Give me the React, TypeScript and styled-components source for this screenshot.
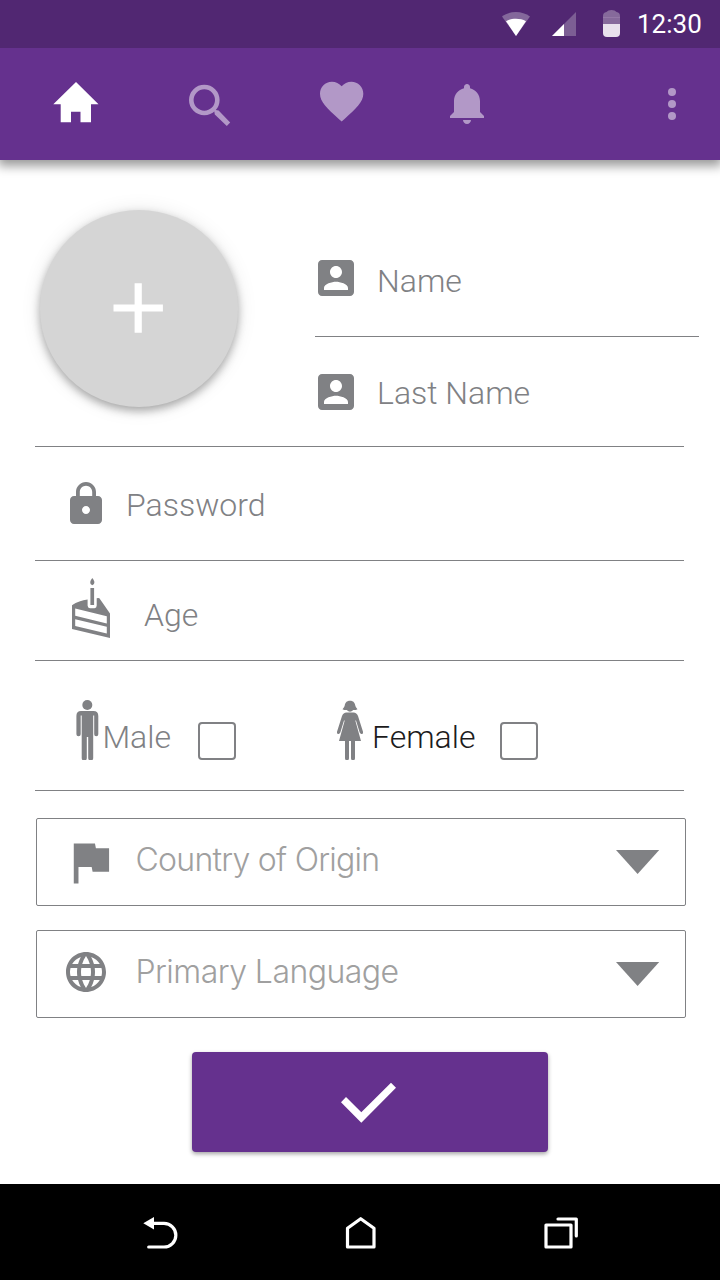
import React from "react";
import styled, { createGlobalStyle } from "styled-components";

const purple = "#65318e";
const purpleDark = "#512772";
const grey = "#808184";

const GlobalStyle = createGlobalStyle`
  * { box-sizing: border-box; }
  body {
    margin: 0;
    background: #fff;
    font-family: Roboto, "Liberation Sans", sans-serif;
  }
  svg { display: block; flex: none; }
`;

const Screen = styled.div`
  width: 720px;
  height: 1280px;
  display: flex;
  flex-direction: column;
  overflow: hidden;
  background: #fff;
`;

const StatusBar = styled.div`
  position: relative;
  z-index: 1;
  height: 48px;
  flex: none;
  display: flex;
  align-items: flex-start;
  padding: 10px 0 0 502px;
  background: ${purpleDark};
`;

const StatusIcon = styled.svg<{ $gap: number; $top?: number }>`
  margin-right: ${(p) => p.$gap}px;
  margin-top: ${(p) => p.$top ?? 0}px;
`;

const Clock = styled.span`
  color: #fff;
  font-size: 26px;
  line-height: 30px;
  margin-top: -1px;
  white-space: nowrap;
`;

const AppBar = styled.nav`
  height: 112px;
  flex: none;
  display: flex;
  align-items: flex-start;
  background: ${purple};
  box-shadow: 0 4px 10px 2px rgba(0, 0, 0, 0.4);
`;

const Tab = styled.svg<{ $left: number; $top: number; $active?: boolean }>`
  margin: ${(p) => p.$top}px 0 0 ${(p) => p.$left}px;
  color: ${(p) => (p.$active ? "#fff" : "#b298c7")};
  fill: currentColor;
`;

const Profile = styled.section`
  height: 286px;
  flex: none;
  display: flex;
`;

const Avatar = styled.button`
  width: 198px;
  height: 196.5px;
  flex: none;
  margin: 50px 77.5px 0 39.5px;
  padding: 0 1px 1.5px 0;
  border: 0;
  border-radius: 50%;
  background: #d5d5d5;
  box-shadow: 0 4px 8px rgba(0, 0, 0, 0.3), 0 1px 20px rgba(0, 0, 0, 0.1);
  display: flex;
  align-items: center;
  justify-content: center;
`;

const Names = styled.div`
  width: 384px;
  display: flex;
  flex-direction: column;
`;

const Field = styled.label<{ $height: number; $left?: number }>`
  height: ${(p) => p.$height}px;
  flex: none;
  display: flex;
  align-items: flex-start;
  padding-left: ${(p) => p.$left ?? 0}px;
`;

const FieldIcon = styled.svg<{ $top: number }>`
  margin-top: ${(p) => p.$top}px;
  fill: ${grey};
`;

const PersonIcon = styled(FieldIcon)`
  margin-left: -3px;
`;

const Label = styled.span<{ $left: number; $top: number; $dark?: boolean }>`
  margin: ${(p) => p.$top}px 0 0 ${(p) => p.$left}px;
  color: ${(p) => (p.$dark ? "#1c1b1c" : grey)};
  font-size: 32px;
  font-weight: 300;
  line-height: 38px;
  white-space: nowrap;
`;

const Rule = styled.div<{ $inset?: boolean }>`
  height: 1px;
  flex: none;
  width: ${(p) => (p.$inset ? 384 : 649)}px;
  margin-left: ${(p) => (p.$inset ? 0 : 35)}px;
  background: ${grey};
`;

const GenderRow = styled.div`
  height: 129px;
  flex: none;
  display: flex;
`;

const Gender = styled.label<{ $left: number; $width: number }>`
  margin-left: ${(p) => p.$left}px;
  width: ${(p) => p.$width}px;
  display: flex;
  align-items: flex-start;
`;

const Checkbox = styled.span`
  width: 38px;
  height: 38px;
  margin: 61px 0 0 auto;
  border: 2px solid ${grey};
  border-radius: 4px;
`;

const Selects = styled.div`
  display: flex;
  flex-direction: column;
  gap: 24px;
  padding: 27px 0 0 36px;
`;

const Select = styled.div`
  width: 650px;
  height: 88px;
  display: flex;
  align-items: flex-start;
  border: 1px solid ${grey};
  border-radius: 2px;
`;

const SelectIcon = styled.svg<{ $top: number }>`
  margin: ${(p) => p.$top}px 0 0 25px;
  fill: ${grey};
`;

const SelectText = styled.span<{ $left: number; $spacing: number }>`
  flex: 1;
  margin: 22px 0 0 ${(p) => p.$left}px;
  color: #a0a0a0;
  font-family: Inter, "Liberation Sans", sans-serif;
  font-size: 32px;
  font-weight: 300;
  line-height: 38px;
  letter-spacing: ${(p) => p.$spacing}px;
  white-space: nowrap;
`;

const Caret = styled.svg`
  margin: 31px 25px 0 0;
  fill: ${grey};
`;

const Submit = styled.button`
  width: 356px;
  height: 100px;
  flex: none;
  margin: 34px 0 0 192px;
  padding: 0;
  border: 0;
  border-radius: 4px;
  background: ${purple};
  box-shadow: 0 2px 4px rgba(0, 0, 0, 0.36);
  display: flex;
  align-items: flex-start;
`;

const CheckMark = styled.svg`
  margin: 30px 0 0 148px;
`;

const SystemBar = styled.footer`
  height: 96px;
  flex: none;
  margin-top: auto;
  display: flex;
  align-items: flex-start;
  padding: 32px 0 0 142px;
  background: #000;
`;

const SystemIcon = styled.svg<{ $gap: number }>`
  margin-right: ${(p) => p.$gap}px;
  fill: none;
  stroke: #fff;
  stroke-width: 3.2;
  stroke-linejoin: round;
  stroke-linecap: round;
`;

const PersonCard = ({ top }: { top: number }) => (
  <PersonIcon $top={top} width="48" height="48" viewBox="0 0 24 24">
    <path d="M3 5v14c0 1.1.89 2 2 2h14c1.1 0 2-.9 2-2V5c0-1.1-.9-2-2-2H5c-1.11 0-2 .9-2 2zm12 4c0 1.66-1.34 3-3 3s-3-1.34-3-3 1.34-3 3-3 3 1.34 3 3zm-9 8c0-2 4-3.1 6-3.1s6 1.1 6 3.1v1H6v-1z" />
  </PersonIcon>
);

const Arrow = () => (
  <Caret width="44" height="24" viewBox="0 0 44 24">
    <path d="M0 0H43.2L21.6 24z" />
  </Caret>
);

export default function App() {
  return (
    <Screen>
      <GlobalStyle />
      <StatusBar>
        <StatusIcon $gap={22} $top={2} width="28" height="24" viewBox="0 0 28 24">
          <path d="M0 4.5C8-1.5 20-1.5 28 4.5L14 24z" fill="#84689b" />
          <path d="M4 9.2C10 6 18 6 24 9.2L14 24z" fill="#fff" />
        </StatusIcon>
        <StatusIcon $gap={27} $top={2} width="24" height="24" viewBox="0 0 24 24">
          <path d="M24 0v24H0z" fill="#7c5e94" />
          <path d="M12 12v12H0z" fill="#fff" />
        </StatusIcon>
        <StatusIcon $gap={17} width="17" height="27" viewBox="0 0 17 27">
          <path d="M0 14V6Q0 2.6 3.4 2Q5 0 8.5 0T13.6 2Q17 2.6 17 6v8z" fill="#866a9b" />
          <path d="M0 7h17v1H0z" fill="#9478a7" />
          <path d="M0 14h17v9q0 4-4 4H4q-4 0-4-4z" fill="#e8e1ec" />
        </StatusIcon>
        <Clock>12:30</Clock>
      </StatusBar>

      <AppBar>
        <Tab $active $left={53} $top={33.5} width="46" height="41" viewBox="0 0 46 41">
          <path d="M23 0L45.5 22.3H38V40.2H27.5V29.8H18V40.2H7.7V22.3H.3z" />
        </Tab>
        <Tab $left={89} $top={36} width="44" height="42" viewBox="0 0 44 42">
          <circle cx="16.3" cy="16" r="13" fill="none" stroke="currentColor" strokeWidth="4.6" />
          <path d="M24.5 25.5L25.8 24.2L27.8 26L30.6 26.6L42.2 38.6L38.8 42L26.8 30.4L26.3 27.4z" />
        </Tab>
        <Tab $left={84} $top={27} width="52" height="52" viewBox="0 0 24 24">
          <path d="M12 21.35l-1.45-1.32C5.4 15.36 2 12.28 2 8.5 2 5.42 4.42 3 7.5 3c1.74 0 3.41.81 4.5 2.09C13.09 3.81 14.76 3 16.5 3 19.58 3 22 5.42 22 8.5c0 3.78-3.4 6.86-8.55 11.54L12 21.35z" transform="translate(-.16 .14)" />
        </Tab>
        <Tab $left={76} $top={32} width="48" height="48" viewBox="0 0 24 24">
          <path d="M11.5 22c1.1 0 2-.9 2-2h-4c0 1.1.9 2 2 2zm6.5-6v-5.5c0-3.07-2.13-5.64-5-6.32V3.5c0-.83-.67-1.5-1.5-1.5S10 2.67 10 3.5v.68c-2.87.68-5 3.25-5 6.32V16l-2 2v1h17v-1l-2-2z" />
        </Tab>
        <Tab $left={176} $top={40} width="8" height="32" viewBox="0 0 8 32">
          <circle cx="4" cy="4" r="4" />
          <circle cx="4" cy="16" r="4" />
          <circle cx="4" cy="28" r="4" />
        </Tab>
      </AppBar>

      <Profile>
        <Avatar aria-label="Add photo">
          <svg width="50" height="50" viewBox="0 0 50 50">
            <path d="M21.6 .3h7.2v21.1h21.1v7.2H28.8v21.1h-7.2V28.6H.5v-7.2h21.1z" fill="#fff" />
          </svg>
        </Avatar>
        <Names>
          <Field $height={176}>
            <PersonCard top={94} />
            <Label $left={17} $top={102}>Name</Label>
          </Field>
          <Rule $inset />
          <Field $height={109}>
            <PersonCard top={31} />
            <Label $left={17} $top={37}>Last Name</Label>
          </Field>
        </Names>
      </Profile>

      <Rule />
      <Field $height={113} $left={62}>
        <FieldIcon $top={33} width="48" height="48" viewBox="0 0 24 24">
          <path d="M18 8h-1V6c0-2.76-2.24-5-5-5S7 3.24 7 6v2H6c-1.1 0-2 .9-2 2v10c0 1.1.9 2 2 2h12c1.1 0 2-.9 2-2V10c0-1.1-.9-2-2-2zm-6 9c-1.1 0-2-.9-2-2s.9-2 2-2 2 .9 2 2-.9 2-2 2zm3.1-9H8.9V6c0-1.71 1.39-3.1 3.1-3.1 1.71 0 3.1 1.39 3.1 3.1v2z" />
        </FieldIcon>
        <Label $left={16} $top={39}>Password</Label>
      </Field>

      <Rule />
      <Field $height={99} $left={72}>
        <FieldIcon $top={17} width="38" height="60" viewBox="0 0 38 60">
          <path d="M20.3 0q4.6 5.4 0 7.2q-4.6-1.8 0-7.2z" />
          <path d="M18.4 10h3.7v17h-3.7z" />
          <path
            fillRule="evenodd"
            d="M0 27.3Q7 22.6 15.6 21.6V27.5Q15.6 30 18 30.2H22.5Q24.7 30 24.7 27.5V20.3Q26 19.6 27.4 20.2L38 35.5V60L0 51zM3.2 30.6V37.8L34.8 45.5V38.2zM3.2 41.2V48.1L34.8 55.6V48.8z"
          />
        </FieldIcon>
        <Label $left={34} $top={35}>Age</Label>
      </Field>

      <Rule />
      <GenderRow>
        <Gender $left={76} $width={160}>
          <FieldIcon $top={39} width="23" height="60" viewBox="0 0 23 60">
            <circle cx="11.3" cy="5" r="5" />
            <path d="M5 11H17.5Q22.3 11 22.3 16V34.2A2 2 0 0 1 18.2 34.2V15.5H17.2V58A2.4 2.4 0 0 1 12.2 58V37H10.8V58A2.4 2.4 0 0 1 5.7 58V15.5H4.7V34.2A2 2 0 0 1 .4 34.2V16Q.4 11 5 11z" />
          </FieldIcon>
          <Label $left={3.4} $top={57}>Male</Label>
          <Checkbox />
        </Gender>
        <Gender $left={100} $width={202}>
          <FieldIcon $top={39} width="27" height="60" viewBox="0 0 27 60">
            <path d="M14 .7C10.5.7 9 3 8.8 5.3Q8.5 7.5 6.5 9.2Q8.8 10.4 10.7 10Q14 13.4 17.3 10Q19.2 10.4 21.5 9.2Q19.5 7.5 19.2 5.3C19 3 17.5.7 14 .7z" />
            <path d="M10.5 12.5H17.5Q20.7 12.5 22 16L27 31.8Q27.3 33.5 26 33.9Q24.4 34.3 23.7 32.5L20 20.5H19.3L25 41H19V58.2A2 2 0 0 1 15 58.2V41H13V58.2A2 2 0 0 1 9 58.2V41H3L8.7 20.5H8L4.3 32.5Q3.6 34.3 2 33.9Q.7 33.5 1 31.8L6 16Q7.3 12.5 10.5 12.5z" />
          </FieldIcon>
          <Label $dark $left={9} $top={57}>Female</Label>
          <Checkbox />
        </Gender>
      </GenderRow>
      <Rule />

      <Selects>
        <Select>
          <SelectIcon $top={14.5} width="56.5" height="56.5" viewBox="0 0 24 24">
            <path d="M14.4 6L14 4H5v17h2v-7h5.6l.4 2h7V6z" />
          </SelectIcon>
          <SelectText $left={17} $spacing={-0.74}>Country of Origin</SelectText>
          <Arrow />
        </Select>
        <Select>
          <SelectIcon $top={17} width="48" height="48" viewBox="0 0 24 24">
            <path d="M11.99 2C6.47 2 2 6.48 2 12s4.47 10 9.99 10C17.52 22 22 17.52 22 12S17.52 2 11.99 2zm6.93 6h-2.95c-.32-1.25-.78-2.45-1.38-3.56 1.84.63 3.37 1.91 4.33 3.56zM12 4.04c.83 1.2 1.48 2.53 1.91 3.96h-3.82c.43-1.43 1.08-2.76 1.91-3.96zM4.26 14C4.1 13.36 4 12.69 4 12s.1-1.36.26-2h3.38c-.08.66-.14 1.32-.14 2 0 .68.06 1.34.14 2H4.26zm.82 2h2.95c.32 1.25.78 2.45 1.38 3.56-1.84-.63-3.37-1.9-4.33-3.56zm2.95-8H5.08c.96-1.66 2.49-2.93 4.33-3.56C8.81 5.55 8.35 6.75 8.03 8zM12 19.96c-.83-1.2-1.48-2.53-1.91-3.96h3.82c-.43 1.43-1.08 2.76-1.91 3.96zM14.34 14H9.66c-.09-.66-.16-1.32-.16-2 0-.68.07-1.35.16-2h4.68c.09.65.16 1.32.16 2 0 .68-.07 1.34-.16 2zm.25 5.56c.6-1.11 1.06-2.31 1.38-3.56h2.95c-.96 1.65-2.49 2.93-4.33 3.56zM16.36 14c.08-.66.14-1.32.14-2 0-.68-.06-1.34-.14-2h3.38c.16.64.26 1.31.26 2s-.1 1.36-.26 2h-3.38z" />
          </SelectIcon>
          <SelectText $left={25.5} $spacing={-0.54}>Primary Language</SelectText>
          <Arrow />
        </Select>
      </Selects>

      <Submit aria-label="Confirm">
        <CheckMark width="57" height="42" viewBox="0 0 57 42">
          <path d="M6 14.9L21.3 30.2L51 .7L56 5.8L21.3 40.8L1 20.2z" fill="#fff" />
        </CheckMark>
      </Submit>

      <SystemBar>
        <SystemIcon $gap={165} width="37" height="34" viewBox="0 0 37 34">
          <path d="M1.3 7.3L12 1V13.5z" fill="#fff" stroke="none" />
          <path d="M10 7.3H22A11.8 11.8 0 0 1 22 31H6.7" />
        </SystemIcon>
        <SystemIcon $gap={164} width="34" height="34" viewBox="0 0 34 34">
          <path d="M3.5 31V12.3L16.7 2.7L30 12.3V31z" />
        </SystemIcon>
        <SystemIcon $gap={0} width="37" height="34" viewBox="0 0 37 34">
          <path d="M4 9H29V31H4z" />
          <path d="M16 3H34.3V20" />
        </SystemIcon>
      </SystemBar>
    </Screen>
  );
}
